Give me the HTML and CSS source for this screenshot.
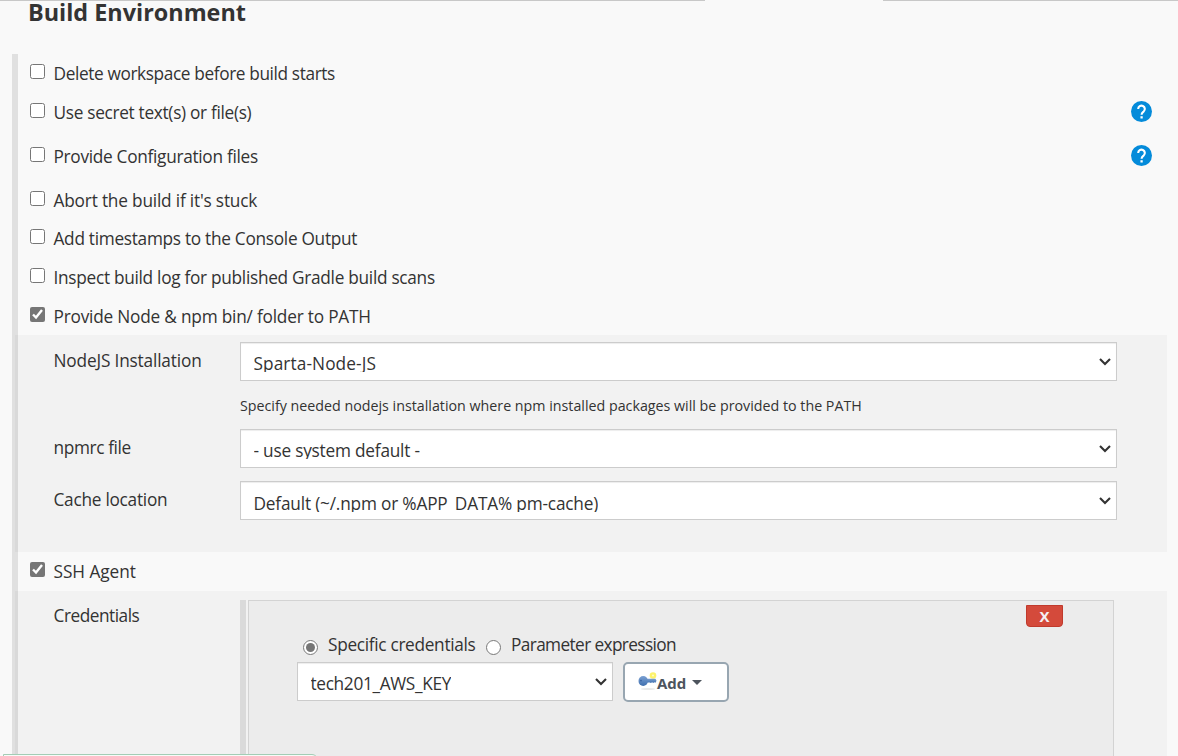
FILE: index.html
```
<!DOCTYPE html>
<html lang="en">
<head>
<meta charset="utf-8">
<title>Build Environment</title>
<link rel="stylesheet" href="styles.css">
</head>
<body>
<div class="top-rule"><span class="rule-left"></span><span class="rule-right"></span></div>
<h2 class="title">Build Environment</h2>
<main class="section">
  <label class="option"><input type="checkbox"><span class="t1">Delete workspace before build starts</span></label>
  <div class="option tall"><input type="checkbox"><span class="t2">Use secret text(s) or file(s)</span>
    <svg class="help" viewBox="0 0 24 24"><circle cx="12" cy="12" r="12"/><path d="M8.2 9.1a3.8 3.8 0 1 1 6.3 2.9c-1.6 1.3-2.4 1.7-2.4 3.6"/><rect x="10.8" y="17.4" width="2.6" height="2.6"/></svg></div>
  <div class="option tall"><input type="checkbox"><span class="t3">Provide Configuration files</span>
    <svg class="help" viewBox="0 0 24 24"><circle cx="12" cy="12" r="12"/><path d="M8.2 9.1a3.8 3.8 0 1 1 6.3 2.9c-1.6 1.3-2.4 1.7-2.4 3.6"/><rect x="10.8" y="17.4" width="2.6" height="2.6"/></svg></div>
  <label class="option short"><input type="checkbox"><span class="t4">Abort the build if it's stuck</span></label>
  <label class="option"><input type="checkbox"><span class="t5">Add timestamps to the Console Output</span></label>
  <label class="option"><input type="checkbox"><span class="t6">Inspect build log for published Gradle build scans</span></label>
  <label class="option short"><input type="checkbox" checked><span class="t7">Provide Node &amp; npm bin/ folder to PATH</span></label>

  <div class="panel node-panel">
    <div class="field">
      <span class="name n1">NodeJS Installation</span>
      <div class="select"><span class="value v1">Sparta-Node-JS</span><svg class="chevron" viewBox="0 0 12 8"><path d="M1 1l5 5 5-5"/></svg></div>
    </div>
    <p class="hint">Specify needed nodejs installation where npm installed packages will be provided to the PATH</p>
    <div class="field npmrc">
      <span class="name n2">npmrc file</span>
      <div class="select"><span class="value v2">- use system default -</span><svg class="chevron" viewBox="0 0 12 8"><path d="M1 1l5 5 5-5"/></svg></div>
    </div>
    <div class="field cache">
      <span class="name n3">Cache location</span>
      <div class="select"><span class="value v3">Default (~/.npm or %APP_DATA% pm-cache)</span><svg class="chevron" viewBox="0 0 12 8"><path d="M1 1l5 5 5-5"/></svg></div>
    </div>
  </div>

  <label class="option"><input type="checkbox" checked><span class="t8">SSH Agent</span></label>

  <div class="panel ssh-panel">
    <span class="name n4">Credentials</span>
    <div class="credentials">
      <button class="delete">X</button>
      <div class="radios">
        <input type="radio" name="cred" checked><span class="r1">Specific credentials</span>
        <input type="radio" name="cred"><span class="r2">Parameter expression</span>
      </div>
      <div class="picker">
        <div class="select"><span class="value v4">tech201_AWS_KEY</span><svg class="chevron" viewBox="0 0 12 8"><path d="M1 1l5 5 5-5"/></svg></div>
        <button class="add">
          <svg class="key" viewBox="0 0 19 19">
            <defs><linearGradient id="steel" x1="0" y1="0" x2="0" y2="1"><stop offset="0" stop-color="#7aa0d2"/><stop offset="1" stop-color="#3f6fae"/></linearGradient></defs>
            <ellipse cx="10" cy="17" rx="7" ry="1" fill="#e9e9e9"/>
            <circle cx="15" cy="3.5" r="3.3" fill="#fdf36b"/><circle cx="15" cy="3.5" r="1" fill="#fffbd0"/>
            <path d="M8 6.7h9.5l1 2-1 2-1.2-.4-1 .8-1.2-.8-1.2.8-1-.6H8z" fill="url(#steel)"/>
            <ellipse cx="5.2" cy="9" rx="4.7" ry="4.9" fill="url(#steel)"/>
            <circle cx="3" cy="8.6" r=".9" fill="#3a62a0"/>
          </svg>
          <span class="add-text">Add</span>
          <svg class="caret" viewBox="0 0 10 5"><path d="M0 0h10L5 5z"/></svg>
        </button>
      </div>
    </div>
  </div>
</main>
<div class="status"></div>
</body>
</html>
```
FILE: styles.css
```
* { box-sizing: border-box; }
body {
  margin: 0;
  height: 756px;
  overflow: hidden;
  position: relative;
  background: #f9f9f9;
  color: #333;
  font: 17.25px/24px "Open Sans", "Noto Sans", sans-serif;
  white-space: nowrap;
}
.top-rule { display: flex; justify-content: space-between; height: 1px; }
.rule-left { width: 705px; background: #c8c8c8; }
.rule-right { width: 295px; background: #c8c8c8; }
.title {
  margin: 0 0 0 28px;
  height: 53px;
  font-size: 23.4px;
  line-height: 22px;
  font-weight: 700;
}
.section { margin-left: 12px; border-left: 6px solid #e0e0e0; height: 702px; }
.option { display: flex; align-items: flex-start; height: 39px; padding: 10px 15px 0 12px; }
.option.tall { height: 44px; }
.option.short { height: 38px; }
.option span { margin: -2px 0 0 8.5px; }

/* Tracking per label */
.t1 { letter-spacing: -.38px; }
.t2 { letter-spacing: -.31px; }
.t3 { letter-spacing: -.3px; }
.t4 { letter-spacing: -.19px; }
.t5 { letter-spacing: -.29px; }
.t6 { letter-spacing: -.29px; }
.t7 { letter-spacing: -.21px; }
.t8 { letter-spacing: -.06px; }
.n1 { letter-spacing: -.17px; }
.n2 { letter-spacing: -.37px; }
.n3 { letter-spacing: -.26px; }
.n4 { letter-spacing: -.48px; }
.v1 { letter-spacing: .09px; }
.v2 { letter-spacing: -.22px; }
.v3 { letter-spacing: -.19px; }
.v4 { letter-spacing: -.33px; }
.r1 { letter-spacing: -.31px; }
.r2 { letter-spacing: -.62px; }

input { width: 15px; height: 15px; margin: 0; flex: none; accent-color: #767676; }
.help { width: 21px; height: 21px; margin: -2px 11px 0 auto; fill: #048bda; }
.help path { fill: none; stroke: #fff; stroke-width: 2.4; }
.help rect { fill: #fff; }
.panel { margin-left: -3px; width: 1152px; background: rgba(0, 0, 0, .028); }
.node-panel { height: 217px; padding: 7px 0 0 38.5px; }
.field { display: flex; }
.name { width: 186.5px; margin-top: 7px; flex: none; }
.select {
  display: flex;
  align-items: center;
  justify-content: space-between;
  width: 877px;
  height: 39px;
  padding: 0 5px 0 12.5px;
  background: #fff;
  border: 1px solid #ccc;
  box-shadow: inset 0 1px 1px rgba(0, 0, 0, .075);
}
.value { height: 20px; overflow: hidden; margin-top: 1px; line-height: 24px; }
.value.v3 { margin-top: 3px; }
.value.v4 { height: 22px; margin-top: 3px; }
.chevron { width: 12px; height: 8px; fill: none; stroke: #333; stroke-width: 2.1; }
.hint { margin: 13px 0 0 186.5px; font-size: 14.25px; line-height: 24px; height: 35px; }
.cache { margin-top: 13px; }
.ssh-panel { display: flex; height: 165px; padding: 9px 0 0 38.5px; overflow: hidden; }
.credentials {
  position: relative;
  width: 866px;
  height: 170px;
  margin-left: 8px;
  padding: 33px 0 0 48px;
  background: #ececec;
  border: 1px solid #d3d3d3;
}
.ssh-panel .credentials::before {
  content: "";
  position: absolute;
  left: -9px;
  top: -1px;
  width: 6px;
  height: 170px;
  background: #dadada;
}
.ssh-panel .name { margin-top: 4px; }
.delete {
  position: absolute;
  right: 50px;
  top: 4px;
  width: 37px;
  height: 22px;
  padding: 0;
  background: #d44a3b;
  border: 1px solid #c03a2c;
  border-radius: 0 0 4px 4px;
  color: #f4eff4;
  font: 700 15px/20px "Open Sans", sans-serif;
}
.radios { display: flex; height: 28px; padding-left: 6px; }
.radios input { margin-top: 6px; }
.radios span { margin: -1px 0 0 10px; }
.radios .r1 { width: 158px; }
.picker { display: flex; gap: 10px; }
.picker .select { width: 316px; }
.add {
  display: flex;
  align-items: center;
  width: 106px;
  height: 40px;
  padding: 0 0 0 13px;
  background: #fff;
  border: 2px solid #98a6b1;
  border-radius: 5px;
  color: #4d545d;
  font: 700 15px/20px "Open Sans", sans-serif;
}
.add-text { margin-top: 1px; }
.key { width: 19px; height: 19px; margin-top: -2px; }
.caret { width: 10px; height: 5px; margin-left: 6px; fill: #4d545d; }
.status {
  position: absolute;
  left: 3px;
  top: 754px;
  width: 315px;
  height: 24px;
  background: #f7fbf8;
  border: 1px solid #a3cdb5;
  border-radius: 0 6px 0 0;
}
```
